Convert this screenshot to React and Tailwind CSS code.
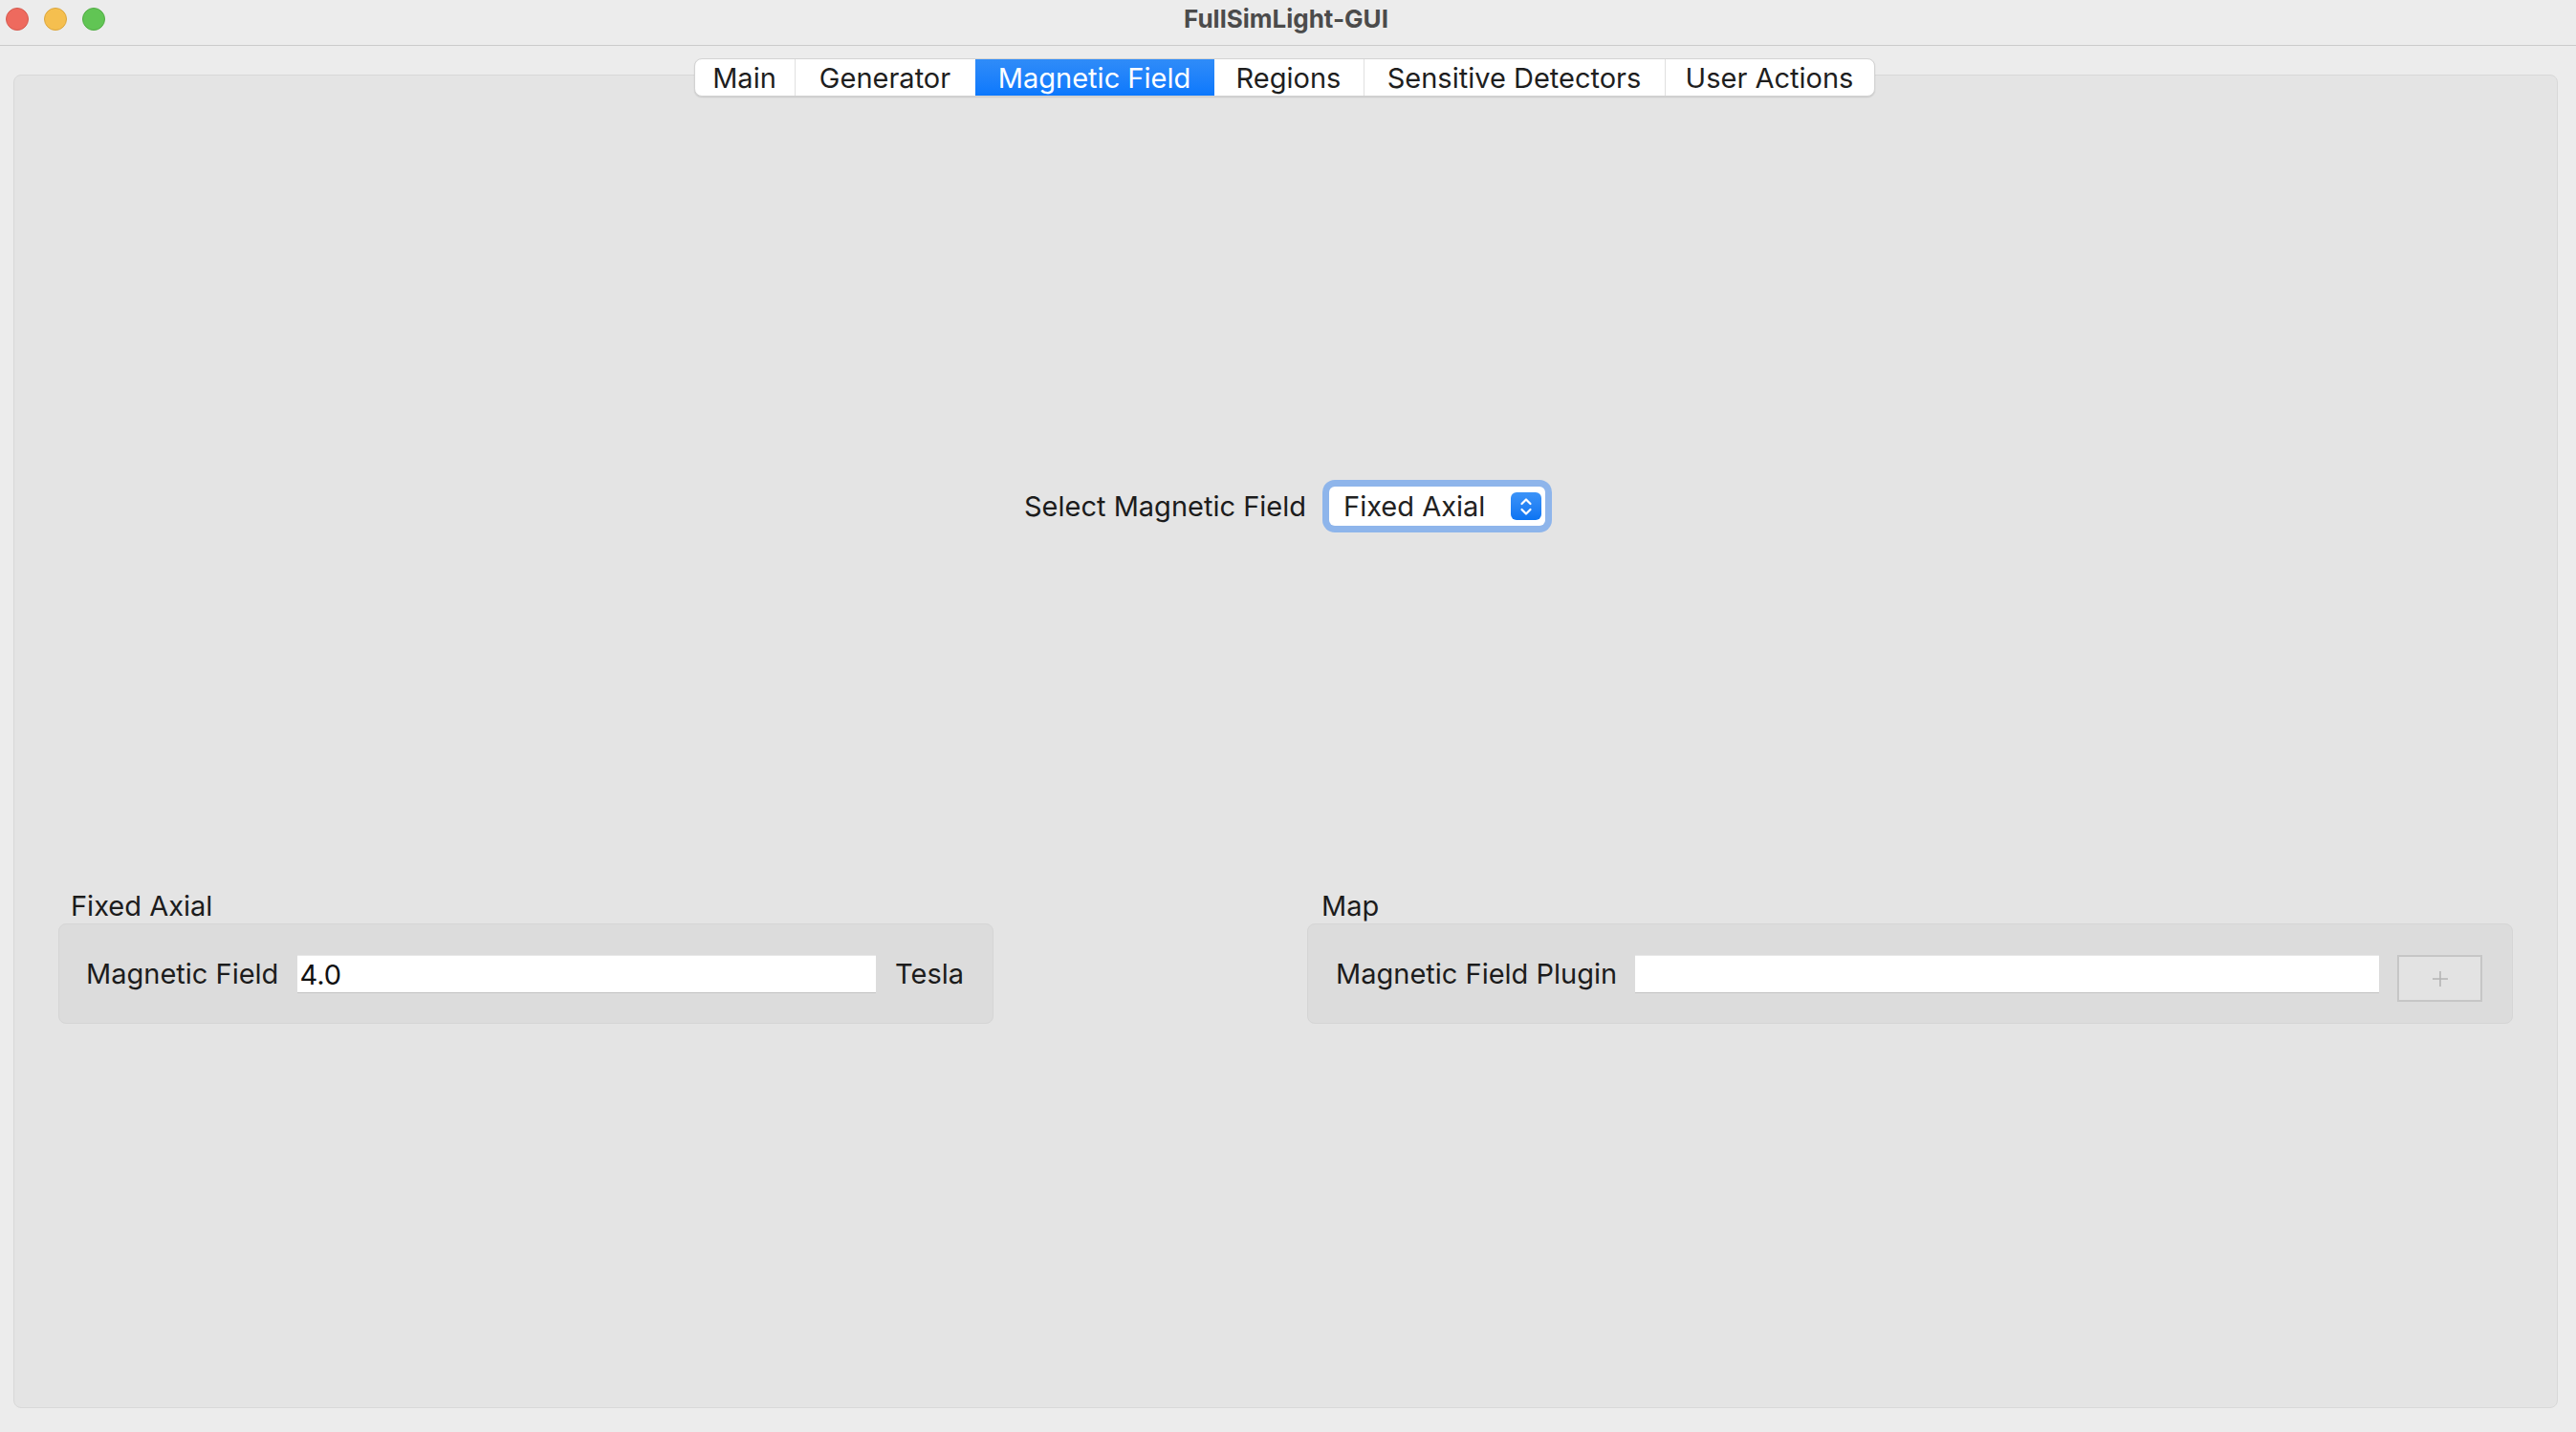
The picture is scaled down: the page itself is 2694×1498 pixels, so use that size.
import React from "react";

const tabs = [
  { label: "Main", width: "w-[104px]" },
  { label: "Generator", width: "w-[189px]" },
  { label: "Magnetic Field", width: "w-[250px]", active: true },
  { label: "Regions", width: "w-[156px]" },
  { label: "Sensitive Detectors", width: "w-[315px]" },
  { label: "User Actions", width: "w-[219px]" },
];

const Stepper = () => (
  <div className="w-[32px] h-[29px] rounded-[6px] bg-gradient-to-b from-[#3b93f8] to-[#0a74f2] flex items-center justify-center">
    <svg width="16" height="22" viewBox="0 0 16 22" fill="none">
      <path d="M3.5 8 L8 3.5 L12.5 8" stroke="white" strokeWidth="2.2" strokeLinecap="round" strokeLinejoin="round" />
      <path d="M3.5 14 L8 18.5 L12.5 14" stroke="white" strokeWidth="2.2" strokeLinecap="round" strokeLinejoin="round" />
    </svg>
  </div>
);

const LineEdit = ({ value }) => (
  <div className="flex-1 h-[39px] bg-white border-t border-[#e8e8e8] shadow-[0_1px_0_#c2c2c2] flex items-center px-[2px] text-[29px] leading-none text-[#111]">
    {value}
  </div>
);

export default function App() {
  return (
    <div className="w-[2694px] h-[1498px] bg-[#ececec] flex flex-col font-['Inter',sans-serif] text-[#1c1c1c]">
      {/* title bar */}
      <div className="h-[48px] border-b border-[#cbcbcb] grid grid-cols-[1fr_auto_1fr] items-center pb-[8px]">
        <div className="flex items-center gap-[16px] pl-[6px]">
          <span className="w-[24px] h-[24px] rounded-full bg-[#ee6a5e] border border-[#d55a4f]" />
          <span className="w-[24px] h-[24px] rounded-full bg-[#f5bf4f] border border-[#dba63d]" />
          <span className="w-[24px] h-[24px] rounded-full bg-[#61c554] border border-[#52ad45]" />
        </div>
        <div className="text-[26px] font-bold text-[#4b4b4b] leading-none -ml-[4px]">FullSimLight-GUI</div>
        <div />
      </div>

      {/* body */}
      <div className="flex-1 pl-[14px] pr-[19px] pt-[30px] pb-[25px]">
        <div className="h-full rounded-[8px] border border-[#d8d8d8] bg-[#e4e4e4] flex flex-col">
          {/* tabs */}
          <div className="flex justify-center -mt-[18px] -ml-[3px]">
            <div className="flex h-[40px] bg-white rounded-[8px] border border-[#d3d3d3] shadow-[0_1px_1.5px_rgba(0,0,0,0.12)] overflow-hidden">
              {tabs.map((t, i) => (
                <div
                  key={t.label}
                  className={`${t.width} flex items-center justify-center text-[29px] leading-none ${
                    t.active
                      ? "bg-gradient-to-b from-[#2f8cf8] to-[#0a78fd] text-white"
                      : "text-[#1e1e1e]"
                  } ${i > 0 && !t.active && !tabs[i - 1].active ? "border-l border-[#e0e0e0]" : ""}`}
                >
                  {t.label}
                </div>
              ))}
            </div>
          </div>

          {/* select row */}
          <div className="flex items-center justify-center gap-[24px] mt-[408px] -ml-[2px]">
            <span className="text-[29px] leading-none">Select Magnetic Field</span>
            <div className="w-[226px] h-[41px] bg-white rounded-[6px] ring-[7px] ring-[#8eb5eb] shadow-[0_1px_1px_rgba(0,0,0,0.2)] flex items-center justify-between pl-[15px] pr-[4px]">
              <span className="text-[29px] leading-none text-[#222]">Fixed Axial</span>
              <Stepper />
            </div>
          </div>

          {/* groups */}
          <div className="flex justify-between px-[46px] mt-[380px]">
            <div className="w-[978px] flex flex-col">
              <div className="text-[29px] leading-[35px] pl-[13px] mb-[1px]">Fixed Axial</div>
              <div className="h-[105px] rounded-[8px] border border-[#d5d5d5] bg-[#dcdcdc] flex items-center gap-[20px] pl-[28px] pr-[30px]">
                <span className="text-[29px] leading-none">Magnetic Field</span>
                <LineEdit value="4.0" />
                <span className="text-[29px] leading-none">Tesla</span>
              </div>
            </div>
            <div className="w-[1261px] flex flex-col">
              <div className="text-[29px] leading-[35px] pl-[15px] mb-[1px]">Map</div>
              <div className="h-[105px] rounded-[8px] border border-[#d5d5d5] bg-[#dcdcdc] flex items-center gap-[19px] pl-[29px] pr-[31px]">
                <span className="text-[29px] leading-none">Magnetic Field Plugin</span>
                <LineEdit value="" />
                <div className="w-[89px] h-[49px] mt-[10px] border-2 border-[#c6c6c6] bg-[#e3e3e3] flex items-center justify-center">
                  <svg width="20" height="20" viewBox="0 0 20 20">
                    <path d="M10 2 V18 M2 10 H18" stroke="#b4b4b4" strokeWidth="1.6" />
                  </svg>
                </div>
              </div>
            </div>
          </div>
        </div>
      </div>
    </div>
  );
}
